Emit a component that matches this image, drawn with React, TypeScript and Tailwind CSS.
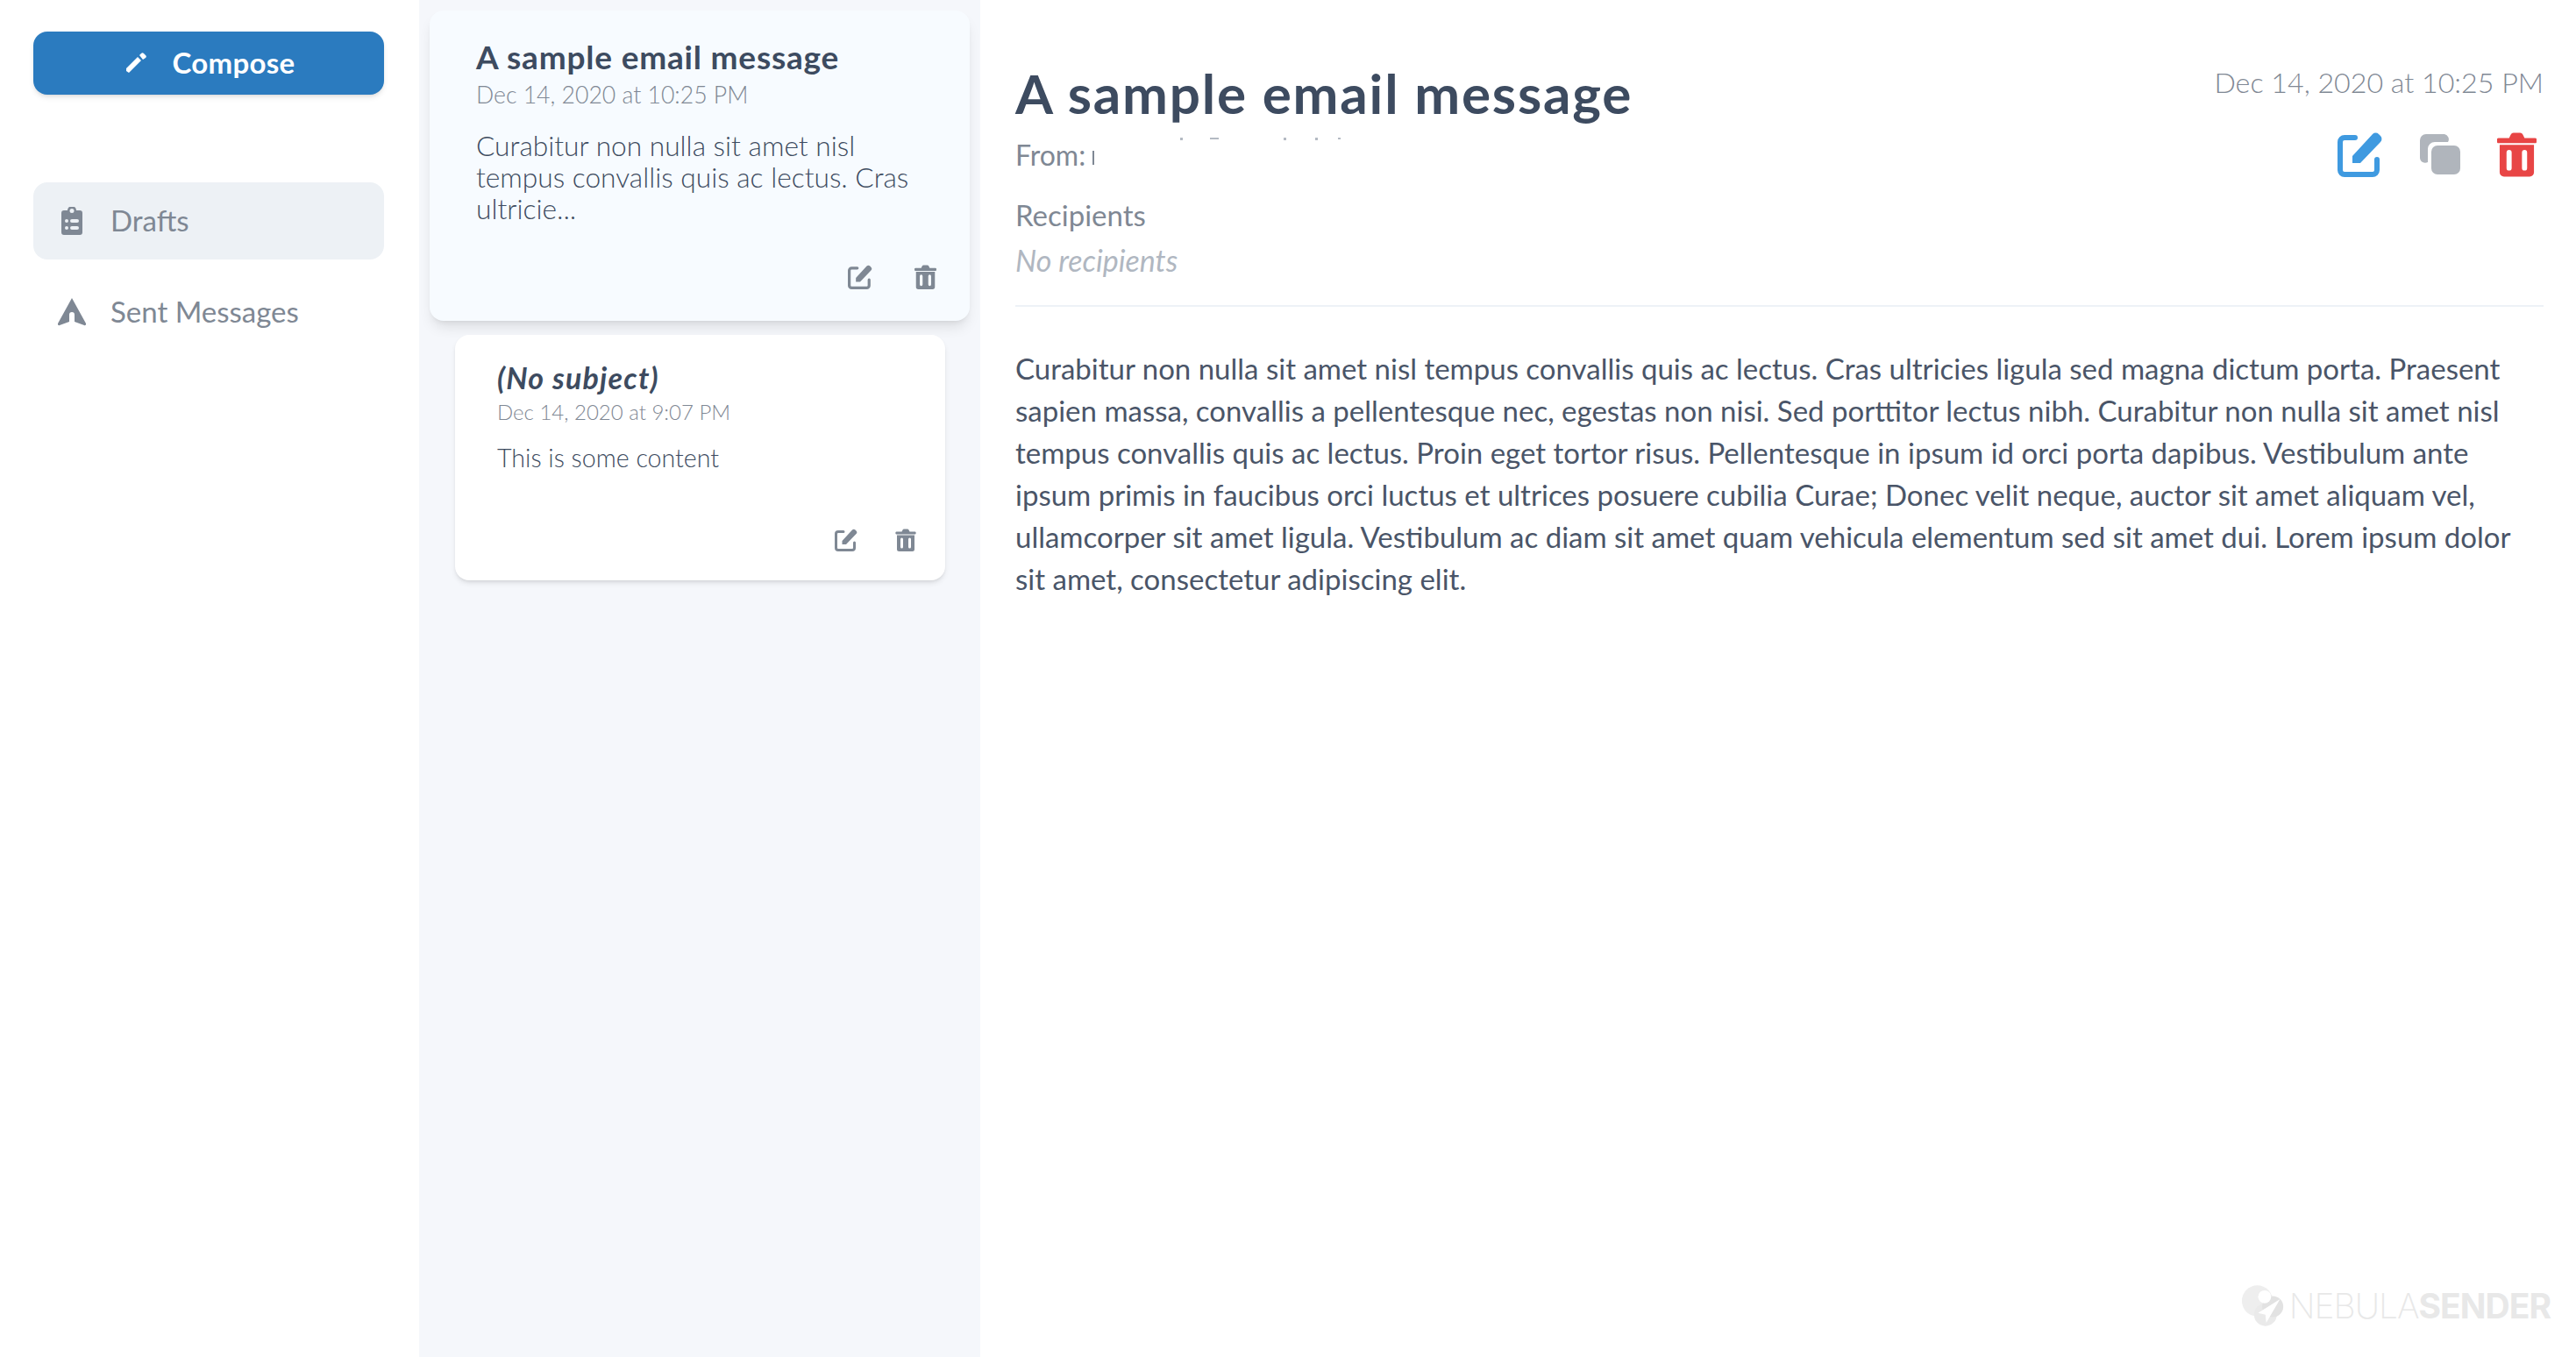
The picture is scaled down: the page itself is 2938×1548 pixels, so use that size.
function EditIcon({ className }: { className: string }) {
  return (
    <svg viewBox="0 0 52 52" className={className} fill="none">
      <path d="M20 7H8a5 5 0 0 0-5 5v32a5 5 0 0 0 5 5h32a5 5 0 0 0 5-5V32" stroke="currentColor" strokeWidth="6" strokeLinecap="round" />
      <path d="M17 28 L40 3 a5 5 0 0 1 7 0 l2 2 a5 5 0 0 1 0 7 L26 36 H17 Z" fill="currentColor" />
    </svg>
  );
}

function TrashIcon({ className }: { className: string }) {
  return (
    <svg viewBox="0 0 46 52" className={className} fill="currentColor">
      <path fillRule="evenodd" d="M2 7h12l2-4a4 4 0 0 1 3-2h8a4 4 0 0 1 3 2l2 4h12a2 2 0 0 1 2 3 2 2 0 0 1-2 3H2a2 2 0 0 1-2-3 2 2 0 0 1 2-3Z" />
      <path fillRule="evenodd" d="M3 15h40v32a5 5 0 0 1-5 5H8a5 5 0 0 1-5-5Zm11 6a3 3 0 0 0-3 3v18a3 3 0 0 0 6 0V24a3 3 0 0 0-3-3Zm18 0a3 3 0 0 0-3 3v18a3 3 0 0 0 6 0V24a3 3 0 0 0-3-3Z" />
    </svg>
  );
}

function CopyIcon({ className }: { className: string }) {
  return (
    <svg viewBox="0 0 46 46" className={className} fill="currentColor">
      <path d="M7 0h21a6 6 0 0 1 4 9H17a8 8 0 0 0-8 8v15a6 6 0 0 1-9-5V7a7 7 0 0 1 7-7Z" />
      <rect x="13" y="13" width="33" height="33" rx="7" />
    </svg>
  );
}

function Logo() {
  return (
    <div className="absolute right-[29px] bottom-[35px] flex items-center gap-[5px] text-[#e8e8e8]">
      <svg viewBox="0 0 54 50" className="w-[50px] h-[47px]">
        <circle cx="20" cy="19" r="19" fill="#eeeeee" />
        <circle cx="30" cy="36" r="14" fill="#eaeaea" />
        <circle cx="39" cy="26" r="13" fill="#e2e2e2" />
        <circle cx="29" cy="14" r="8" fill="#ffffff" />
        <path d="M48 17 L31 46 L30 36 L21 34 Z" fill="#ffffff" />
      </svg>
      <div className="text-[39px] leading-none font-['Inter',sans-serif] tracking-[-1px]">
        <span className="font-extralight">NEBULA</span>
        <span className="font-bold">SENDER</span>
      </div>
    </div>
  );
}

export default function App() {
  return (
    <div className="relative flex h-screen overflow-hidden bg-white font-['Lato',sans-serif] text-[#4a5568]">
      <aside className="w-[478px] shrink-0 pl-[38px] pr-[40px] pt-[36px]">
        <button className="flex items-center justify-center w-full h-[72px] pl-[4px] rounded-2xl bg-[#2b7bbf] text-white text-[33px] tracking-[0.3px] font-bold shadow-md">
          <svg viewBox="0 0 24 24" className="w-[24px] h-[24px] mr-[29px]" fill="currentColor">
            <path d="M1 21 L4 23 L18 9 L14 5 L1 18 Z" />
            <path d="M16 3 L18 1 a2 2 0 0 1 3 0 l2 2 a2 2 0 0 1 0 3 L20 8 Z" />
          </svg>
          Compose
        </button>
        <div className="mt-[100px] flex items-center h-[88px] rounded-2xl bg-[#edf1f5] pl-[32px] text-[#7f8894] text-[33px]">
          <svg viewBox="0 0 24 32" className="w-[24px] h-[32px] mr-[32px]" fill="currentColor">
            <path fillRule="evenodd" d="M3 4h4a5 5 0 0 1 10 0h4a3 3 0 0 1 3 3v22a3 3 0 0 1-3 3H3a3 3 0 0 1-3-3V7a3 3 0 0 1 3-3Zm9-2a2.5 2.5 0 0 0 0 5 2.5 2.5 0 0 0 0-5ZM6 14a2 2 0 0 0 0 4 2 2 0 0 0 0-4Zm6 0a2 2 0 0 0 0 4h6a2 2 0 0 0 0-4Zm-6 8a2 2 0 0 0 0 4 2 2 0 0 0 0-4Zm6 0a2 2 0 0 0 0 4h6a2 2 0 0 0 0-4Z" />
          </svg>
          Drafts
        </div>
        <div className="mt-[16px] flex items-center h-[88px] pl-[28px] text-[#7f8894] text-[33px]">
          <svg viewBox="0 0 32 32" className="w-[32px] h-[32px] mr-[28px]" fill="currentColor">
            <path d="M16 0 L32 29 a1.5 1.5 0 0 1-2 2 L19 27 V19 a3 3 0 0 0-6 0 V27 L2 31 a1.5 1.5 0 0 1-2-2 Z" />
          </svg>
          Sent Messages
        </div>
      </aside>

      <section className="w-[640px] shrink-0 bg-[#f5f7fb] pt-[12px]">
        <div className="ml-[12px] w-[616px] h-[354px] rounded-2xl bg-[#f7fbff] shadow-lg pl-[53px] pr-[38px] pt-[29px]">
          <div className="text-[37px] leading-[48px] tracking-[0.8px] font-bold text-[#3d4b60]">A sample email message</div>
          <div className="mt-[1px] text-[26.6px] leading-[36px] text-[#7f8894] font-light">Dec 14, 2020 at 10:25 PM</div>
          <div className="mt-[22px] text-[31.7px] leading-[36px] text-[#3d4b60] font-light">
            Curabitur non nulla sit amet nisl tempus convallis quis ac lectus. Cras ultricie...
          </div>
          <div className="mt-[46px] flex justify-end gap-[47px]">
            <EditIcon className="w-[30px] h-[28px] text-[#7f8894]" />
            <TrashIcon className="w-[25px] h-[28px] text-[#7f8894]" />
          </div>
        </div>
        <div className="mt-[16px] ml-[41px] w-[559px] h-[280px] rounded-2xl bg-white shadow-md pl-[48px] pr-[33px] pt-[28px]">
          <div className="text-[34px] leading-[42px] tracking-[1.2px] font-bold italic text-[#3d4b60]">(No subject)</div>
          <div className="text-[24px] leading-[36px] text-[#7f8894] font-light">Dec 14, 2020 at 9:07 PM</div>
          <div className="mt-[16px] text-[28.6px] leading-[36px] text-[#3d4b60] font-light">This is some content</div>
          <div className="mt-[63px] flex justify-end gap-[42px]">
            <EditIcon className="w-[28px] h-[26px] text-[#7f8894]" />
            <TrashIcon className="w-[24px] h-[26px] text-[#7f8894]" />
          </div>
        </div>
      </section>

      <main className="flex-1 pl-[40px] pr-[37px] pt-[70px]">
        <div className="flex justify-between border-b-2 border-[#edf2f7] h-[280px]">
          <div>
            <h1 className="text-[62px] leading-[72px] tracking-[1.8px] font-bold text-[#3d4b60]">A sample email message</h1>
            <div className="relative mt-[13px] text-[32px] leading-[44px] text-[#7f8894] flex items-center">
              From:&nbsp;
              <span className="inline-block w-[2px] h-[16px] bg-[#7f8894] mt-[6px]" />
              <svg viewBox="0 0 200 4" className="absolute left-[186px] top-[2px] w-[200px] h-[4px]" fill="#b4bac3">
                <rect x="2" y="0" width="3" height="3" />
                <rect x="36" y="0" width="10" height="2" />
                <rect x="120" y="0" width="3" height="3" />
                <rect x="156" y="0" width="3" height="3" />
                <rect x="182" y="0" width="3" height="2" />
              </svg>
            </div>
            <div className="mt-[24px] text-[33px] leading-[44px] text-[#7f8894]">Recipients</div>
            <div className="mt-[8px] text-[34px] leading-[44px] italic text-[#b0b7c1]">No recipients</div>
          </div>
          <div className="flex flex-col items-end">
            <div className="mt-[2px] text-[32.2px] leading-[44px] text-[#7f8894] font-light">Dec 14, 2020 at 10:25 PM</div>
            <div className="mt-[34px] flex items-center gap-[42px] pr-[8px]">
              <EditIcon className="w-[52px] h-[52px] text-[#3f9ae0]" />
              <CopyIcon className="w-[46px] h-[46px] text-[#b0b5bc]" />
              <TrashIcon className="w-[45px] h-[52px] text-[#e84545]" />
            </div>
          </div>
        </div>
        <p className="mt-[46px] text-[33px] leading-[48px] text-[#4a5568]">
          Curabitur non nulla sit amet nisl tempus convallis quis ac lectus. Cras ultricies ligula sed magna dictum porta. Praesent sapien massa, convallis a pellentesque nec, egestas non nisi. Sed porttitor lectus nibh. Curabitur non nulla sit amet nisl tempus convallis quis ac lectus. Proin eget tortor risus. Pellentesque in ipsum id orci porta dapibus. Vestibulum ante ipsum primis in faucibus orci luctus et ultrices posuere cubilia Curae; Donec velit neque, auctor sit amet aliquam vel, ullamcorper sit amet ligula. Vestibulum ac diam sit amet quam vehicula elementum sed sit amet dui. Lorem ipsum dolor sit amet, consectetur adipiscing elit.
        </p>
      </main>
      <Logo />
    </div>
  );
}
